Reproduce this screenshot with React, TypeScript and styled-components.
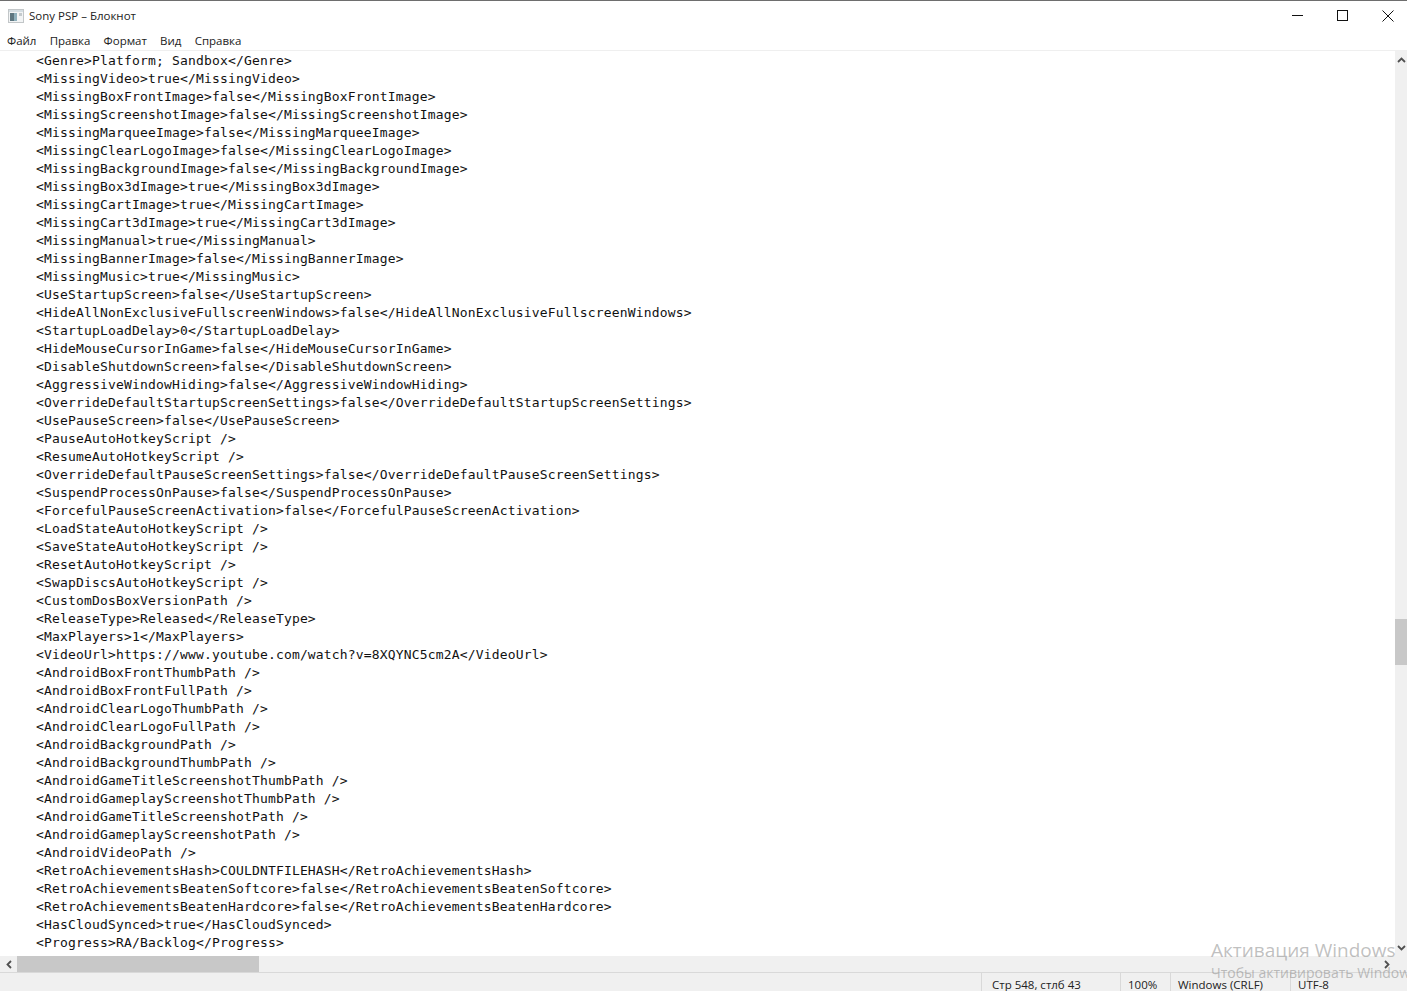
import styled, { createGlobalStyle } from "styled-components";

const lines = [
  "<Genre>Platform; Sandbox</Genre>",
  "<MissingVideo>true</MissingVideo>",
  "<MissingBoxFrontImage>false</MissingBoxFrontImage>",
  "<MissingScreenshotImage>false</MissingScreenshotImage>",
  "<MissingMarqueeImage>false</MissingMarqueeImage>",
  "<MissingClearLogoImage>false</MissingClearLogoImage>",
  "<MissingBackgroundImage>false</MissingBackgroundImage>",
  "<MissingBox3dImage>true</MissingBox3dImage>",
  "<MissingCartImage>true</MissingCartImage>",
  "<MissingCart3dImage>true</MissingCart3dImage>",
  "<MissingManual>true</MissingManual>",
  "<MissingBannerImage>false</MissingBannerImage>",
  "<MissingMusic>true</MissingMusic>",
  "<UseStartupScreen>false</UseStartupScreen>",
  "<HideAllNonExclusiveFullscreenWindows>false</HideAllNonExclusiveFullscreenWindows>",
  "<StartupLoadDelay>0</StartupLoadDelay>",
  "<HideMouseCursorInGame>false</HideMouseCursorInGame>",
  "<DisableShutdownScreen>false</DisableShutdownScreen>",
  "<AggressiveWindowHiding>false</AggressiveWindowHiding>",
  "<OverrideDefaultStartupScreenSettings>false</OverrideDefaultStartupScreenSettings>",
  "<UsePauseScreen>false</UsePauseScreen>",
  "<PauseAutoHotkeyScript />",
  "<ResumeAutoHotkeyScript />",
  "<OverrideDefaultPauseScreenSettings>false</OverrideDefaultPauseScreenSettings>",
  "<SuspendProcessOnPause>false</SuspendProcessOnPause>",
  "<ForcefulPauseScreenActivation>false</ForcefulPauseScreenActivation>",
  "<LoadStateAutoHotkeyScript />",
  "<SaveStateAutoHotkeyScript />",
  "<ResetAutoHotkeyScript />",
  "<SwapDiscsAutoHotkeyScript />",
  "<CustomDosBoxVersionPath />",
  "<ReleaseType>Released</ReleaseType>",
  "<MaxPlayers>1</MaxPlayers>",
  "<VideoUrl>https://www.youtube.com/watch?v=8XQYNC5cm2A</VideoUrl>",
  "<AndroidBoxFrontThumbPath />",
  "<AndroidBoxFrontFullPath />",
  "<AndroidClearLogoThumbPath />",
  "<AndroidClearLogoFullPath />",
  "<AndroidBackgroundPath />",
  "<AndroidBackgroundThumbPath />",
  "<AndroidGameTitleScreenshotThumbPath />",
  "<AndroidGameplayScreenshotThumbPath />",
  "<AndroidGameTitleScreenshotPath />",
  "<AndroidGameplayScreenshotPath />",
  "<AndroidVideoPath />",
  "<RetroAchievementsHash>COULDNTFILEHASH</RetroAchievementsHash>",
  "<RetroAchievementsBeatenSoftcore>false</RetroAchievementsBeatenSoftcore>",
  "<RetroAchievementsBeatenHardcore>false</RetroAchievementsBeatenHardcore>",
  "<HasCloudSynced>true</HasCloudSynced>",
  "<Progress>RA/Backlog</Progress>",
];

const menuItems = ["Файл", "Правка", "Формат", "Вид", "Справка"];

const App = () => {
  return (
    <Page>
      <GlobalStyle />
      <TitleBar>
        <TitleLeft>
          <svg width="16" height="14" viewBox="0 0 16 14">
            <rect x="0.5" y="0.5" width="15" height="13" fill="#f2f4f5" stroke="#c2c6c8" />
            <rect x="1" y="1" width="14" height="2" fill="#d4dde2" />
            <rect x="2" y="4" width="4" height="8" fill="#5d7680" />
            <rect x="6" y="4" width="3" height="8" fill="#8fb0bc" />
            <rect x="11" y="4" width="3" height="3" fill="#c4cacd" />
          </svg>
          <span>Sony PSP – Блокнот</span>
        </TitleLeft>
        <WindowButtons>
          <WindowButton>
            <svg width="11" height="11" viewBox="0 0 11 11">
              <path d="M0 5.5h11" stroke="#111" fill="none" />
            </svg>
          </WindowButton>
          <WindowButton>
            <svg width="11" height="11" viewBox="0 0 11 11">
              <rect x="0.5" y="0.5" width="10" height="10" stroke="#111" fill="none" />
            </svg>
          </WindowButton>
          <WindowButton>
            <svg width="12" height="12" viewBox="0 0 12 12">
              <path d="M0.5 0.5l11 11M11.5 0.5l-11 11" stroke="#111" fill="none" />
            </svg>
          </WindowButton>
        </WindowButtons>
      </TitleBar>
      <MenuBar>
        {menuItems.map((item) => (
          <MenuItem key={item}>{item}</MenuItem>
        ))}
      </MenuBar>
      <EditorRow>
        <Editor>
          {lines.map((line, i) => (
            <Line key={i}>{"    " + line}</Line>
          ))}
        </Editor>
        <VScroll>
          <Arrow>
            <svg width="9" height="6" viewBox="0 0 9 6">
              <path d="M1 5l3.5-3.5L8 5" stroke="#505050" strokeWidth="1.8" fill="none" />
            </svg>
          </Arrow>
          <VThumb />
          <Arrow $end>
            <svg width="9" height="6" viewBox="0 0 9 6">
              <path d="M1 1l3.5 3.5L8 1" stroke="#505050" strokeWidth="1.8" fill="none" />
            </svg>
          </Arrow>
        </VScroll>
      </EditorRow>
      <HScroll>
        <HArrow>
          <svg width="6" height="9" viewBox="0 0 6 9">
            <path d="M5 1L1.5 4.5 5 8" stroke="#505050" strokeWidth="1.8" fill="none" />
          </svg>
        </HArrow>
        <HThumb />
        <HArrow $end>
          <svg width="6" height="9" viewBox="0 0 6 9">
            <path d="M1 1l3.5 3.5L1 8" stroke="#505050" strokeWidth="1.8" fill="none" />
          </svg>
        </HArrow>
      </HScroll>
      <StatusBar>
        <StatusCell $w={139} $pad={10}>
          Стр 548, стлб 43
        </StatusCell>
        <StatusCell $w={50} $pad={7}>
          100%
        </StatusCell>
        <StatusCell $w={120} $pad={7}>
          Windows (CRLF)
        </StatusCell>
        <StatusCell $w={117} $pad={7}>
          UTF-8
        </StatusCell>
      </StatusBar>
      <Watermark>
        <WatermarkTitle>Активация Windows</WatermarkTitle>
        <WatermarkText>Чтобы активировать Windows, перейдите</WatermarkText>
      </Watermark>
    </Page>
  );
};

export default App;

const GlobalStyle = createGlobalStyle`
  html, body {
    margin: 0;
    padding: 0;
    background: #fff;
  }
`;

const Page = styled.div`
  width: 1407px;
  height: 991px;
  position: relative;
  overflow: hidden;
  display: flex;
  flex-direction: column;
  background: #fff;
  font-family: "Open Sans", "Noto Sans", sans-serif;
  font-size: 11.5px;
  color: #1a1a1a;
`;

const TitleBar = styled.div`
  height: 29px;
  flex: none;
  border-top: 1px solid #6e6e6e;
  display: flex;
  align-items: center;
  justify-content: space-between;
`;

const TitleLeft = styled.div`
  display: flex;
  align-items: center;
  gap: 5px;
  padding-left: 8px;
  color: #222;
`;

const WindowButtons = styled.div`
  display: flex;
  gap: 15.5px;
  padding-right: 4px;
`;

const WindowButton = styled.div`
  width: 30px;
  height: 29px;
  display: flex;
  align-items: center;
  justify-content: center;
`;

const MenuBar = styled.div`
  height: 20px;
  flex: none;
  display: flex;
  align-items: center;
  gap: 13.2px;
  padding-left: 7px;
  border-bottom: 1px solid #efefef;
`;

const MenuItem = styled.span`
  color: #222;
`;

const EditorRow = styled.div`
  flex: 1;
  min-height: 0;
  display: flex;
`;

const Editor = styled.div`
  flex: 1;
  overflow: hidden;
  padding: 1px 0 0 4px;
  font-family: "DejaVu Sans Mono", "Liberation Mono", monospace;
  font-size: 13px;
  letter-spacing: 0.17px;
  line-height: 18px;
  color: #111;
`;

const Line = styled.div`
  white-space: pre;
  height: 18px;
`;

const VScroll = styled.div`
  width: 12px;
  flex: none;
  background: #f0f0f0;
  display: flex;
  flex-direction: column;
`;

const Arrow = styled.div<{ $end?: boolean }>`
  height: 17px;
  display: flex;
  align-items: center;
  justify-content: center;
  margin-top: ${(p) => (p.$end ? "auto" : "0")};
  margin-bottom: ${(p) => (p.$end ? "0" : "551px")};
`;

const VThumb = styled.div`
  height: 46px;
  background: #c8c8c8;
`;

const HScroll = styled.div`
  height: 16px;
  flex: none;
  background: #f0f0f0;
  display: flex;
  align-items: stretch;
`;

const HArrow = styled.div<{ $end?: boolean }>`
  width: 17px;
  display: flex;
  align-items: center;
  justify-content: center;
  margin-left: ${(p) => (p.$end ? "auto" : "0")};
  margin-right: ${(p) => (p.$end ? "12px" : "0")};
`;

const HThumb = styled.div`
  width: 242px;
  background: #c8c8c8;
`;

const StatusBar = styled.div`
  height: 18px;
  flex: none;
  background: #f0f0f0;
  border-top: 1px solid #d9d9d9;
  display: flex;
  justify-content: flex-end;
`;

const StatusCell = styled.div<{ $w: number; $pad: number }>`
  width: ${(p) => p.$w}px;
  box-sizing: border-box;
  padding-left: ${(p) => p.$pad}px;
  padding-top: 3px;
  border-left: 1px solid #d9d9d9;
  color: #222;
  line-height: 18px;
  white-space: nowrap;
`;

const Watermark = styled.div`
  position: absolute;
  left: 1211px;
  top: 937px;
  white-space: nowrap;
  color: rgba(130, 130, 130, 0.5);
`;

const WatermarkTitle = styled.div`
  font-size: 19px;
  line-height: 27px;
`;

const WatermarkText = styled.div`
  font-size: 14px;
  line-height: 19px;
  margin-top: -1px;
`;
